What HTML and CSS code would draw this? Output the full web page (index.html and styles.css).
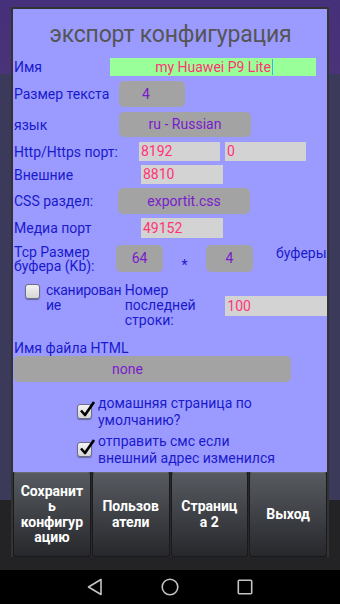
FILE: index.html
```html
<!DOCTYPE html>
<html lang="ru">
<head>
    <meta charset="UTF-8">
    <meta name="viewport" content="width=device-width, initial-scale=1.0">
    <title>экспорт конфигурация</title>
    <link rel="stylesheet" href="styles.css">
</head>
<body>
<div class="screen">
    <!-- Dialog -->
    <div class="dialog">
        <div class="content">
            <h1 class="title">экспорт конфигурация</h1>

            <div class="row r-name">
                <span class="label w-name">Имя</span>
                <div class="edit green">my Huawei P9 Lite<span class="cursor"></span></div>
            </div>

            <div class="row r-size">
                <span class="label w-size">Размер текста</span>
                <div class="spin s-size">4</div>
            </div>

            <div class="row r-lang">
                <span class="label w-size">язык</span>
                <div class="spin s-wide">ru - Russian</div>
            </div>

            <div class="row r-port">
                <span class="label w-port">Http/Https порт:</span>
                <div class="edit gray e-port">8192</div>
                <div class="edit gray e-port second">0</div>
            </div>

            <div class="row r-ext">
                <span class="label w-ext">Внешние</span>
                <div class="edit gray e-ext">8810</div>
            </div>

            <div class="row r-css">
                <span class="label w-css">CSS раздел:</span>
                <div class="spin s-wide">exportit.css</div>
            </div>

            <div class="row r-media">
                <span class="label w-ext">Медиа порт</span>
                <div class="edit gray e-ext">49152</div>
            </div>

            <div class="row r-tcp">
                <span class="label w-tcp">Tcp Размер буфера (Kb):</span>
                <div class="spin s-small">64</div>
                <span class="star">*</span>
                <div class="spin s-small">4</div>
                <span class="label buffers">буферы</span>
            </div>

            <div class="row r-scan">
                <span class="box"></span>
                <span class="label scan-text">сканирован<br>ие</span>
                <span class="label last-text">Номер последней строки:</span>
                <div class="edit gray e-last">100</div>
            </div>

            <div class="label html-label">Имя файла HTML</div>
            <div class="spin s-html">none</div>

            <div class="check r-home">
                <span class="box checked">
                    <svg width="18" height="18" viewBox="0 0 18 18"><path d="M3 9.5 L7 14 L16 1" fill="none" stroke="#000" stroke-width="2.6" stroke-linejoin="round"/></svg>
                </span>
                <span class="label">домашняя страница по умолчанию?</span>
            </div>

            <div class="check r-sms">
                <span class="box checked">
                    <svg width="18" height="18" viewBox="0 0 18 18"><path d="M3 9.5 L7 14 L16 1" fill="none" stroke="#000" stroke-width="2.6" stroke-linejoin="round"/></svg>
                </span>
                <span class="label">отправить смс если внешний адрес изменился</span>
            </div>
        </div>

        <div class="buttons">
            <div class="btn">Сохранит<br>ь<br>конфигур<br>ацию</div>
            <div class="btn">Пользов<br>атели</div>
            <div class="btn">Страниц<br>а 2</div>
            <div class="btn">Выход</div>
        </div>
    </div>

    <!-- Navigation bar -->
    <div class="navbar">
        <svg width="16" height="18" viewBox="0 0 16 18"><path d="M14 1.5 L14 16.5 L1.5 9 Z" fill="none" stroke="#c4c4c4" stroke-width="1.6" stroke-linejoin="round"/></svg>
        <svg width="18" height="18" viewBox="0 0 18 18"><circle cx="9" cy="9" r="7.8" fill="none" stroke="#c4c4c4" stroke-width="1.6"/></svg>
        <svg width="16" height="16" viewBox="0 0 16 16"><rect x="1.3" y="1.3" width="13.4" height="13.4" rx="1" fill="none" stroke="#c4c4c4" stroke-width="1.6"/></svg>
    </div>
</div>
</body>
</html>
```

FILE: styles.css
```css
body {
    margin: 0;
    font-family: Roboto, "Liberation Sans", Arial, sans-serif;
}
.screen {
    width: 340px;
    height: 604px;
    display: flex;
    flex-direction: column;
    overflow: hidden;
    background: linear-gradient(#45307a 0, #4a3378 74px, #3c3a5a 74px, #3c3a5a 500px, #232326 500px);
}
.dialog {
    margin: 7px 0 0 11px;
    width: 314px;
    border: 2px solid #333;
    border-bottom: none;
    background: #9b9bff;
}
.content {
    height: 463px;
    padding-left: 1px;
}
.title {
    margin: 0;
    height: 49px;
    padding-top: 4px;
    box-sizing: border-box;
    font-size: 23px;
    font-weight: normal;
    letter-spacing: -0.2px;
    line-height: 44px;
    text-align: center;
    color: #555;
}
.row {
    display: flex;
    align-items: center;
}
.label {
    font-size: 14px;
    color: #1a1acc;
    line-height: 16px;
}
.edit {
    font-size: 14px;
    color: #ff3377;
    padding-left: 2px;
    box-sizing: border-box;
    white-space: nowrap;
}
.edit.gray {
    background: #d3d3d3;
}
.edit.green {
    background: #99ff99;
    width: 206px;
    height: 18px;
    line-height: 18px;
    text-align: center;
}
.cursor {
    display: inline-block;
    width: 1px;
    height: 16px;
    margin-left: 1px;
    vertical-align: -3px;
    background: #33b5e5;
}
.spin {
    background: #a3a3a3;
    border-radius: 5px;
    font-size: 14px;
    color: #7a1ccc;
    text-align: center;
}

/* rows */
.r-name { height: 18px; }
.w-name { width: 96px; }

.r-size { margin-top: 5px; height: 26px; }
.w-size { width: 105px; }
.s-size { width: 66px; height: 26px; line-height: 26px; text-align: left; padding-left: 23px; box-sizing: border-box; }

.r-lang { margin-top: 5px; height: 25px; }
.s-wide { width: 132px; height: 25px; line-height: 25px; }

.r-port { margin-top: 5px; height: 19px; }
.w-port { width: 125px; }
.e-port { width: 81px; height: 19px; line-height: 19px; }
.e-port.second { margin-left: 5px; }

.r-ext { margin-top: 4px; height: 19px; }
.w-ext { width: 127px; }
.e-ext { width: 82px; height: 19px; line-height: 19px; }

.r-css { margin-top: 4px; height: 26px; }
.w-css { width: 104px; }
.r-css .s-wide { height: 26px; line-height: 26px; }

.r-media { margin-top: 4px; height: 20px; }
.r-media .e-ext { height: 20px; line-height: 20px; }

.r-tcp { margin-top: 7px; height: 27px; align-items: flex-start; }
.w-tcp { width: 102px; line-height: 14px; }
.s-small { width: 47px; height: 27px; line-height: 27px; }
.star { width: 43px; text-align: center; padding-top: 12px; font-size: 14px; color: #1a1acc; line-height: 16px; }
.buffers { margin-left: 23px; }

.r-scan { margin-top: 11px; height: 46px; align-items: flex-start; }
.box {
    position: relative;
    flex: none;
    width: 13px;
    height: 13px;
    border: 1px solid #6c6c88;
    border-radius: 3px;
    background: linear-gradient(#f2f2f2, #d6d6d6);
    box-shadow: 0 1px 1px rgba(0, 0, 0, 0.35);
}
.r-scan .box { margin: 1px 0 0 11px; }
.scan-text { width: 78px; margin-left: 6px; line-height: 15px; letter-spacing: -0.3px; white-space: nowrap; }
.last-text { width: 101px; margin-left: 1px; line-height: 15px; }
.e-last { margin-top: 13px; width: 102px; height: 20px; line-height: 20px; }

.html-label { margin-top: 11px; height: 16px; }
.s-html { width: 277px; height: 26px; line-height: 26px; text-align: left; padding-left: 98px; box-sizing: border-box; }

.check {
    display: flex;
    align-items: center;
    padding-left: 63px;
    height: 33px;
}
.check .label { width: 185px; margin-left: 6px; line-height: 17px; }
.r-home { margin-top: 13px; }
.r-sms { margin-top: 5px; }
.box.checked svg {
    position: absolute;
    left: 0;
    top: -4px;
}

/* buttons */
.buttons {
    display: flex;
    gap: 1px;
    height: 85px;
    background: #2a2a2e;
}
.btn {
    flex: 1;
    display: flex;
    align-items: center;
    justify-content: center;
    text-align: center;
    border: 1px solid #1a1a1c;
    border-top-color: #6a6d72;
    border-radius: 3px;
    background: linear-gradient(#575a60, #26282c);
    color: #fff;
    font-weight: bold;
    font-size: 14px;
    line-height: 15.5px;
}

.navbar {
    margin-top: auto;
    height: 34px;
    background: #000;
    display: flex;
    align-items: center;
    justify-content: center;
    gap: 58px;
}
```
